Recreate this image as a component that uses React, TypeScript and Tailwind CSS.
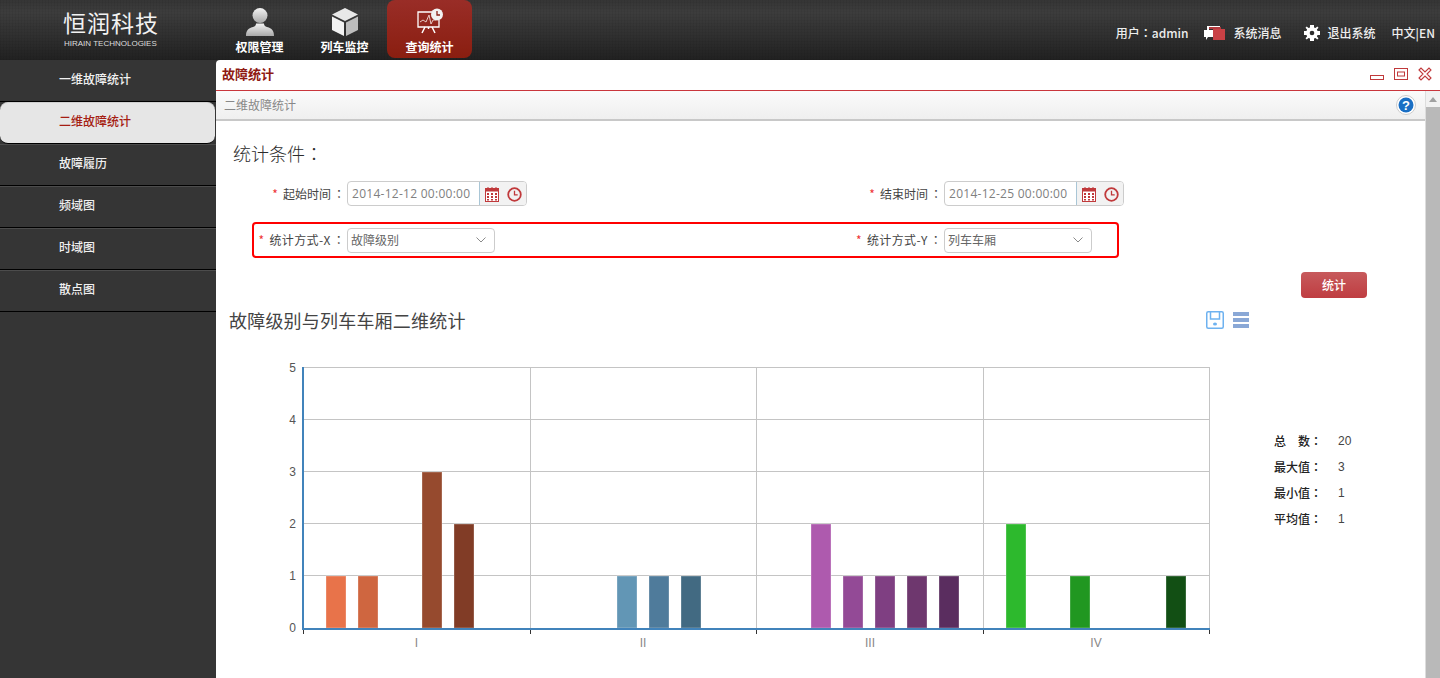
import React from "react";

const cjk = "font-['Noto_Sans_CJK_SC','Open_Sans',sans-serif]";

const Colon = ({ className = "" }: { className?: string }) => (
  <span className={`font-['Noto_Sans_CJK_TC',sans-serif] ${className}`}>：</span>
);

const UserIcon = () => (
  <svg width="30" height="30" viewBox="0 0 30 30">
    <defs>
      <linearGradient id="ug" x1="0" y1="0" x2="0" y2="1">
        <stop offset="0" stopColor="#f4f4f4" />
        <stop offset="1" stopColor="#a9a9a9" />
      </linearGradient>
    </defs>
    <circle cx="15" cy="8.500" r="7.500" fill="url(#ug)" />
    <path d="M1 29c0-5.500 2-7.500 7-9 2-.7 3-1.500 3-3.500h8c0 2 1 2.800 3 3.500 5 1.500 7 3.500 7 9z" fill="url(#ug)" />
  </svg>
);
const BoxIcon = () => (
  <svg width="30" height="30" viewBox="0 0 30 30">
    <path d="M15 1 28 7.500 15 14 2 7.500z" fill="#e8e8e8" />
    <path d="M2 9.500 14 15.500V29L2 23z" fill="#f2f2f2" />
    <path d="M28 9.500 16 15.500V29L28 23z" fill="#bdbdbd" />
  </svg>
);
const BoardIcon = () => (
  <svg width="28" height="28" viewBox="0 0 28 28" fill="none" stroke="#fff">
    <path d="M16 4H2v15h21v-7" strokeWidth="1.300" />
    <path d="M4 14l3-2 3 2 3-7 2 9 2-4h3" strokeWidth="1" stroke="#e9c9c4" />
    <path d="M9 19l-3 6M16 19l3 6M12.500 19v2" strokeWidth="1.500" />
    <circle cx="21" cy="6.500" r="6" fill="#f2f2f2" stroke="none" />
    <path d="M21 3v4h3" stroke="#8a2219" strokeWidth="1.300" />
  </svg>
);
const MsgIcon = () => (
  <svg width="21" height="14" viewBox="0 0 21 14">
    <path d="M3 0h13v3H5v1H3z" fill="#fff" />
    <path d="M5 1h12v2H5z" fill="#b33a3e" />
    <path d="M0 4h9v7H4l-2 3v-3H0z" fill="#fff" />
    <rect x="9" y="3" width="12" height="11" fill="#c94145" />
  </svg>
);
const GearIcon = () => (
  <svg width="16" height="16" viewBox="0 0 16 16">
    <path d="M6 0h4v2.500l1.500.6L13.300 1.500 14.500 2.700l-1.600 1.800.6 1.500H16v4h-2.500l-.6 1.500 1.600 1.800-1.200 1.200-1.800-1.600-1.500.6V16H6v-2.500l-1.500-.6-1.800 1.600-1.200-1.200 1.600-1.800-.6-1.500H0V6h2.500l.6-1.500L1.500 2.700l1.200-1.200 1.800 1.600L6 2.500z" fill="#fff" />
    <circle cx="8" cy="8" r="2.300" fill="#2c2c2c" />
  </svg>
);
const CalIcon = () => (
  <svg width="14" height="15" viewBox="0 0 14 15">
    <rect x="0.500" y="1.500" width="13" height="13" fill="#fff" stroke="#c0393b" />
    <rect x="0" y="1" width="14" height="3.500" fill="#c0393b" />
    <path d="M3 0v2M7 0v2M11 0v2" stroke="#c0393b" />
    <path d="M2 6h2v2H2zM6 6h2v2H6zM10 6h2v2h-2zM2 9h2v2H2zM6 9h2v2H6zM10 9h2v2h-2zM2 12h2v1.500H2zM6 12h2v1.500H6zM10 12h2v1.500h-2z" fill="#c0393b" />
  </svg>
);
const ClockIcon = () => (
  <svg width="15" height="15" viewBox="0 0 15 15" fill="none" stroke="#c0393b">
    <circle cx="7.500" cy="7.500" r="6.300" strokeWidth="1.800" />
    <path d="M7.500 3.800v4h3.200" strokeWidth="1.300" />
  </svg>
);
const Chevron = () => (
  <svg width="10" height="6" viewBox="0 0 10 6" fill="none" stroke="#8a8a8a"><path d="M.5.500 5 5 9.500.5" /></svg>
);

const nav = [
  { t: "权限管理", i: <UserIcon />, active: false },
  { t: "列车监控", i: <BoxIcon />, active: false },
  { t: "查询统计", i: <BoardIcon />, active: true },
];
const side = ["一维故障统计", "二维故障统计", "故障履历", "频域图", "时域图", "散点图"];

const Label = ({ w, text, wide = false }: { w: string; text: string; wide?: boolean }) => (
  <div className={`${w} text-right text-xs text-[#444] whitespace-nowrap ${wide ? "tracking-[0.35px]" : ""}`}>
    <span className="text-[#e33] mr-[5px]">*</span>
    {text}
    <Colon className="ml-[2px]" />
  </div>
);
const DateField = ({ v }: { v: string }) => (
  <div className="ml-0.5 flex h-[25px] w-[180px] rounded border border-[#ccc] overflow-hidden">
    <div className="w-[132px] border-r border-[#a9c6d6] px-1 text-xs leading-[23px] tracking-[0.27px] text-[#808080] font-['Open_Sans',sans-serif] whitespace-nowrap">{v}</div>
    <div className="flex-1 flex items-center justify-center gap-2 bg-[#f2f2f2] pt-0.5"><CalIcon /><ClockIcon /></div>
  </div>
);
const SelectField = ({ v }: { v: string }) => (
  <div className="ml-0.5 flex items-center justify-between h-[25px] w-[148px] rounded border border-[#ccc] pl-[3px] pr-2 text-xs text-[#666]">
    <span>{v}</span><Chevron />
  </div>
);

const bars: [number, number, string][] = [
  [326, 1, "#e8734a"], [358, 1, "#cf6640"], [422, 3, "#964a2e"], [454, 2, "#813c26"],
  [617, 1, "#6296b5"], [649, 1, "#4f7b9b"], [681, 1, "#426a82"],
  [811, 2, "#ae5aae"], [843, 1, "#934a96"], [875, 1, "#7f3f82"], [907, 1, "#6e376e"], [939, 1, "#5a2d5f"],
  [1006, 2, "#2db92d"], [1070, 1, "#219721"], [1166, 1, "#124f14"],
];

const Chart = () => (
  <svg width="1050" height="333" viewBox="216 345 1050 333" className="block shrink-0" fontFamily="'Liberation Sans', Arial, sans-serif" fontSize="12" fill="#555">
    {[368, 420, 472, 524, 576].map((y) => (
      <line key={y} x1="303" x2="1209.500" y1={y - 0.5} y2={y - 0.5} stroke="#c4c4c4" />
    ))}
    {[530.500, 756.500, 983.500, 1209.500].map((x) => (
      <line key={x} x1={x} x2={x} y1="367" y2="628" stroke="#c4c4c4" />
    ))}
    {bars.map(([x, v, c]) => (
      <rect key={x} x={x} y={628 - v * 52} width="20" height={v * 52} fill={c} stroke="#fff" strokeOpacity="0.300" />
    ))}
    <line x1="303" x2="303" y1="367" y2="630" stroke="#4183bb" strokeWidth="2" />
    <line x1="302" x2="1210" y1="629" y2="629" stroke="#4183bb" strokeWidth="2" />
    {[303.500, 530.500, 756.500, 983.500, 1209.500].map((x) => (
      <line key={x} x1={x} x2={x} y1="630" y2="634" stroke="#333" />
    ))}
    {[0, 1, 2, 3, 4, 5].map((n) => (
      <text key={n} x="296" y={632 - n * 52} textAnchor="end">{n}</text>
    ))}
    {[["I", 416.500], ["II", 643], ["III", 870], ["IV", 1096]].map(([t, x]) => (
      <text key={t as string} x={x as number} y="647" textAnchor="middle" fill="#888">{t}</text>
    ))}
  </svg>
);

const stats = [["总　数", "20"], ["最大值", "3"], ["最小值", "1"], ["平均值", "1"]];

export default function App() {
  return (
    <div className={`h-[678px] w-[1440px] overflow-hidden flex flex-col bg-[#353535] ${cjk}`}>
      <header className="h-[60px] shrink-0 flex bg-[repeating-linear-gradient(90deg,rgba(0,0,0,0.05)_0_1px,transparent_1px_3px),repeating-linear-gradient(0deg,rgba(0,0,0,0.04)_0_1px,transparent_1px_3px),linear-gradient(#353535,#3d3d3d_20%,#2c2c2c_70%,#212121)] text-white">
        <div className="w-[217px] shrink-0 pl-[63px] pt-[6px]">
          <div className="text-[23px] leading-[32px] tracking-[1px] font-normal text-[#f2f2f2] whitespace-nowrap">恒润科技</div>
          <div className="pl-px text-[8px] leading-[12px] text-[#ddd] font-['Liberation_Sans',sans-serif] whitespace-nowrap">HIRAIN TECHNOLOGIES</div>
        </div>
        <nav className="flex">
          {nav.map((n) => (
            <div key={n.t} className={`w-[85px] h-[58px] flex flex-col items-center pt-[7px] rounded-lg ${n.active ? "bg-[linear-gradient(#992d27,#8a1e10)]" : ""}`}>
              <div className="h-[30px] flex items-center justify-center">{n.i}</div>
              <div className="text-xs font-bold leading-[16px] mt-[2px]">{n.t}</div>
            </div>
          ))}
        </nav>
        <div className="flex-1 flex items-center justify-end pr-[5px] text-xs text-[#eee] font-medium pt-[6px] whitespace-nowrap">
          <span>用户<Colon />admin</span>
          <span className="ml-[15px]"><MsgIcon /></span>
          <span className="ml-[9px]">系统消息</span>
          <span className="ml-[22px]"><GearIcon /></span>
          <span className="ml-2">退出系统</span>
          <span className="ml-[16px]">中文|EN</span>
        </div>
      </header>

      <div className="flex flex-1 min-h-0">
        <aside className="w-[216px] shrink-0 bg-[#353535]">
          {side.map((s, i) => (
            <div key={s} className={`h-[42px] border-b border-black pl-[59px] text-xs font-medium leading-[36px] border-t ${i === 1 ? "rounded-lg border-t-[#d0d0d0] bg-[#e6e6e6] text-[#a51d13] mr-px" : i === 0 ? "border-t-transparent text-[#f0f0f0]" : "border-t-[#4c4c4c] text-[#f0f0f0]"}`}>{s}</div>
          ))}
        </aside>

        <main className="flex-1 min-w-0 min-h-0 bg-white rounded-tl flex flex-col">
          <div className="h-[31px] shrink-0 flex items-center justify-between border-b border-[#c9363c] pl-1.5 pr-2 pb-[2px]">
            <span className="text-[13px] font-bold text-[#8f1a12]">故障统计</span>
            <div className="flex items-center gap-2.5">
              <svg width="14" height="14" viewBox="0 0 14 14" fill="none" stroke="#c0393b"><rect x="0.500" y="8.500" width="13" height="4" /></svg>
              <svg width="14" height="14" viewBox="0 0 14 14" fill="none" stroke="#c0393b"><rect x="0.500" y="1.500" width="13" height="11" /><rect x="3.500" y="5" width="7" height="4" /></svg>
              <svg width="14" height="14" viewBox="0 0 14 14" fill="none" stroke="#c0393b" strokeWidth="1.100"><path d="M1 3 3 1l4 4 4-4 2 2-4 4 4 4-2 2-4-4-4 4-2-2 4-4z" /></svg>
            </div>
          </div>
          <div className="flex flex-1 min-h-0">
            <div className="flex-1 min-w-0 min-h-0 overflow-hidden flex flex-col">
              <div className="h-[30px] shrink-0 flex items-center justify-between border-b-2 border-[#c8c8c8] bg-[linear-gradient(#fbfbfb,#efefef)] pl-2 pr-[9px]">
                <span className="text-xs text-[#888]">二维故障统计</span>
                <svg width="20" height="20" viewBox="0 0 20 20">
                  <circle cx="10" cy="10" r="9.500" fill="#fff" stroke="#ccc" />
                  <circle cx="10" cy="10" r="7.500" fill="#1a6fc4" />
                  <text x="10" y="14.500" textAnchor="middle" fill="#fff" fontSize="13" fontWeight="700" fontFamily="'Liberation Sans',sans-serif">?</text>
                </svg>
              </div>
              <div className="pt-5 pl-[17px] shrink-0 text-[18px] leading-[24px] text-[#2c2c2c] font-light">统计条件<Colon /></div>
              <div className="mt-4 flex h-[25px] items-center shrink-0">
                <div className="w-[597px] flex items-center"><Label w="w-[129px]" text="起始时间" /><DateField v="2014-12-12 00:00:00" /></div>
                <div className="flex items-center"><Label w="w-[129px]" text="结束时间" /><DateField v="2014-12-25 00:00:00" /></div>
              </div>
              <div className="mt-4 ml-9 w-[867px] h-[36px] shrink-0 flex items-center rounded border-2 border-[#f00]">
                <div className="w-[559px] flex items-center"><Label w="w-[91px]" text="统计方式-X" wide /><SelectField v="故障级别" /></div>
                <div className="flex items-center"><Label w="w-[129px]" text="统计方式-Y" wide /><SelectField v="列车车厢" /></div>
              </div>
              <div className="mt-[14px] h-[26px] flex justify-end shrink-0 pr-[58px]">
                <div className="w-[66px] h-[26px] rounded bg-[linear-gradient(#c75a5c,#bf3d41)] text-center text-xs font-medium leading-[26px] text-white">统计</div>
              </div>
              <div className="flex items-center h-[36px] mt-1 pl-[13px] pr-[175px] shrink-0">
                <span className="flex-1 text-[18px] font-normal text-[#444] tracking-[0.2px]">故障级别与列车车厢二维统计</span>
                <svg width="18" height="18" viewBox="0 0 18 18" fill="none" stroke="#6eb2f0" strokeWidth="1.500"><rect x="0.750" y="0.750" width="16.500" height="16.500" rx="1.500" /><path d="M4.500 1v7h9V1" /><ellipse cx="9" cy="13" rx="2" ry="1.500" fill="#6eb2f0" stroke="none" /></svg>
                <svg width="18" height="18" viewBox="0 0 18 18" className="ml-2" fill="#8aa8d6"><rect x="1" y="1" width="16" height="4" /><rect x="1" y="7" width="16" height="4" /><rect x="1" y="13" width="16" height="4" /></svg>
              </div>
              <div className="mt-[7px] flex shrink-0">
                <Chart />
                <div className="ml-2 mt-[83px] flex flex-col text-xs text-[#444]">
                  {stats.map(([k, v]) => (
                    <div key={k} className="flex h-[26px] items-center">
                      <span className="w-16 font-medium text-[#222]">{k}<Colon /></span>
                      <span className="font-['Liberation_Sans',sans-serif]">{v}</span>
                    </div>
                  ))}
                </div>
              </div>
            </div>
            <div className="w-[15px] shrink-0 flex flex-col items-center border-l border-[#ddd] bg-[#f1f1f1]">
              <div className="h-4 flex items-center justify-center"><div className="border-x-[4px] border-b-[5px] border-x-transparent border-b-[#a0a0a0]" /></div>
              <div className="flex-1 w-full bg-[#b9b9b9]" />
            </div>
          </div>
        </main>
      </div>
    </div>
  );
}
